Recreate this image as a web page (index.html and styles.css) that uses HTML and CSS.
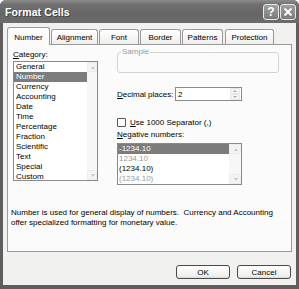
FILE: index.html
```html
<!DOCTYPE html>
<html>
<head>
<meta charset="utf-8">
<link rel="stylesheet" href="styles.css">
</head>
<body>
<div class="window">
  <div class="titlebar">
    <span class="title">Format Cells</span>
    <div class="tbtns">
      <span class="tbtn">?</span>
      <span class="tbtn close">
        <svg width="10" height="10" viewBox="0 0 10 10"><path d="M1.5 1.5 L8.5 8.5 M8.5 1.5 L1.5 8.5" stroke="#fff" stroke-width="1.8" fill="none"/></svg>
      </span>
    </div>
  </div>
  <div class="body">
    <div class="tabs">
      <div class="tab active t1">Number</div>
      <div class="tab t2">Alignment</div>
      <div class="tab t3">Font</div>
      <div class="tab t4">Border</div>
      <div class="tab t5">Patterns</div>
      <div class="tab t6">Protection</div>
    </div>
    <div class="panel">
      <div class="top">
        <div class="leftcol">
          <div class="label"><u>C</u>ategory:</div>
          <div class="listbox cat">
            <div class="items">
              <div class="item">General</div>
              <div class="item sel">Number</div>
              <div class="item">Currency</div>
              <div class="item">Accounting</div>
              <div class="item">Date</div>
              <div class="item">Time</div>
              <div class="item">Percentage</div>
              <div class="item">Fraction</div>
              <div class="item">Scientific</div>
              <div class="item">Text</div>
              <div class="item">Special</div>
              <div class="item">Custom</div>
            </div>
            <div class="scroll">
              <span class="arrow up"></span>
              <span class="arrow down"></span>
            </div>
          </div>
        </div>
        <div class="rightcol">
          <fieldset class="sample"><legend>Sample</legend></fieldset>
          <div class="decrow">
            <span class="declabel"><u>D</u>ecimal places:</span>
            <div class="spinbox">
              <span class="val">2</span>
              <span class="spin"><span class="sarrow sup"></span><span class="sarrow sdown"></span></span>
            </div>
          </div>
          <div class="chkrow">
            <span class="chk"></span>
            <span><u>U</u>se 1000 Separator (,)</span>
          </div>
          <div class="label neglabel"><u>N</u>egative numbers:</div>
          <div class="listbox neg">
            <div class="items">
              <div class="item sel">-1234.10</div>
              <div class="item gray">1234.10</div>
              <div class="item">(1234.10)</div>
              <div class="item gray">(1234.10)</div>
            </div>
            <div class="scroll">
              <span class="arrow up"></span>
              <span class="arrow down"></span>
            </div>
          </div>
        </div>
      </div>
      <div class="desc">Number is used for general display of numbers.&nbsp; Currency and Accounting offer specialized formatting for monetary value.</div>
    </div>
    <div class="buttons">
      <div class="btn">OK</div>
      <div class="btn">Cancel</div>
    </div>
  </div>
</div>
</body>
</html>
```
FILE: styles.css
```css
* { box-sizing: border-box; }
html, body { margin: 0; padding: 0; background: #fff; }
body { font-family: "Liberation Sans", Arial, sans-serif; font-size: 8px; color: #000; }

.window {
  width: 299px; height: 289px;
  display: flex; flex-direction: column;
  background: #5e5e5e;
  padding: 0 3px 4px 3px;
  border-radius: 6px 6px 0 0;
}
.titlebar {
  height: 23px;
  display: flex; align-items: center; justify-content: space-between;
  background: linear-gradient(#8c8c8c 0%, #6f6f6f 20%, #666 60%, #6c6c6c 100%);
  margin: 0 -3px;
  padding-left: 5px; padding-right: 3px;
  border-radius: 6px 6px 0 0;
}
.title { color: #fff; font-weight: bold; font-size: 10.5px; text-shadow: 1px 1px 0 #444; letter-spacing: 0.1px; }
.tbtns { display: flex; gap: 1px; }
.tbtn {
  width: 16px; height: 16px;
  border: 1px solid #e8e8e8; border-radius: 3px;
  background: linear-gradient(#a0a0a0, #7a7a7a);
  color: #fff; font-weight: bold; font-size: 12px; line-height: 14px;
  display: flex; align-items: center; justify-content: center;
}
.body {
  flex: 1;
  background: #f1f1ef;
  padding: 4px 4px 6px 4px;
  display: flex; flex-direction: column;
}
.tabs { height: 17px; display: flex; align-items: flex-end; position: relative; z-index: 1; }
.tab {
  height: 15px;
  border: 1px solid #9a9a9a; border-bottom: none;
  border-radius: 3px 3px 0 0;
  background: linear-gradient(#ffffff, #eeeeec);
  display: flex; align-items: center; justify-content: center;
  padding-top: 1px;
  margin-right: 1px;
}
.tab.active { background: #fbfbfb; margin-bottom: -1px; height: 18px; }
.t1 { width: 43px; }
.t2 { width: 47px; }
.t3 { width: 40px; margin-right: 1px; }
.t4 { width: 41px; }
.t5 { width: 41px; margin-right: 2px; }
.t6 { width: 49px; }

.panel {
  height: 208px;
  border: 1px solid #9a9a9a;
  background: #fbfbfb;
  padding: 3px 5px 0 5px;
  display: flex; flex-direction: column;
}
.top { display: flex; gap: 19px; }
.leftcol { width: 85px; display: flex; flex-direction: column; }
.label { height: 12px; line-height: 12px; }
.leftcol .label { margin-top: 1px; }
.listbox {
  border: 1px solid #8a8a8a;
  background: #fff;
  display: flex;
}
.cat { height: 120px; }
.items { flex: 1; }
.item { height: 10px; line-height: 10px; padding-left: 2px; white-space: nowrap; }
.item.sel { background: #7c7c7c; color: #fff; }
.item.gray { color: #9a9a9a; }
.scroll {
  width: 10px; position: relative;
  background: #f7f7f7;
}
.arrow {
  position: absolute; left: 0; width: 10px; height: 10px;
  border: 1px solid #ececec; border-radius: 2px; background: #f4f4f4;
}
.arrow.up { top: 0; }
.arrow.down { bottom: 0; }
.arrow::after {
  content: ""; position: absolute; width: 0; height: 0;
  border-left: 2px solid transparent; border-right: 2px solid transparent;
}
.arrow.up::after { top: 3px; border-bottom: 3px solid #c8c8c8; left: 2.5px; }
.arrow.down::after { top: 3px; border-top: 3px solid #c8c8c8; left: 2.5px; }

.rightcol { flex: 1; display: flex; flex-direction: column; padding-right: 7px; }
.sample {
  margin: 0; padding: 0;
  height: 25px;
  border: 1px solid #d4d4d0; border-radius: 3px;
}
.sample legend { color: #9a9a9a; padding: 0 1px; margin-left: 3px; font-size: 8px; line-height: 8px; }
.decrow { display: flex; align-items: center; margin-top: 14px; height: 14px; }
.declabel { width: 58px; }
.spinbox {
  width: 67px; height: 14px;
  border: 1px solid #8a8a8a; background: #fff;
  display: flex; align-items: center; justify-content: space-between;
  padding-left: 2px;
}
.spin { width: 10px; height: 12px; display: flex; flex-direction: column; margin-right: 1px; }
.sarrow { flex: 1; border: 1px solid #e6e6e6; border-radius: 1px; background: #f6f6f6; position: relative; }
.sarrow::after {
  content: ""; position: absolute; left: 2px; top: 1px;
  border-left: 2px solid transparent; border-right: 2px solid transparent;
}
.sup::after { border-bottom: 2px solid #aaa; }
.sdown::after { border-top: 2px solid #aaa; }
.chkrow { display: flex; align-items: center; gap: 4px; margin-top: 16px; height: 10px; }
.chk { width: 9px; height: 9px; border: 1px solid #555; background: #fff; border-radius: 1px; }
.neglabel { margin-top: 2px; }
.neg { height: 42px; margin-top: 2px; width: 125px; }
.neg .scroll { width: 12px; }
.neg .arrow { width: 12px; }
.neg .arrow::after { left: 3.5px; }
.neg .item { padding-left: 1px; }
.desc { margin-top: 23px; margin-left: -2px; line-height: 10px; width: 272px; }

.buttons { display: flex; justify-content: flex-end; gap: 7px; margin-top: 13px; padding-right: 1px; }
.btn {
  width: 54px; height: 14px;
  border: 1px solid #4a4a4a; border-radius: 3px;
  background: linear-gradient(#ffffff, #f0f0ee 80%, #dcdcda);
  display: flex; align-items: center; justify-content: center;
}
```
